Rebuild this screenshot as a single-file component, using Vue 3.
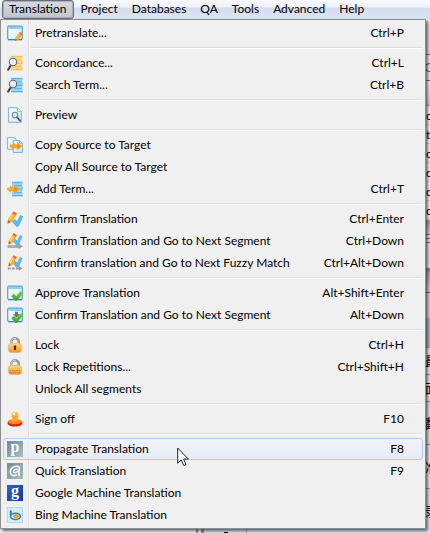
<script setup>
import { ref } from 'vue'

const menus = ['Translation', 'Project', 'Databases', 'QA', 'Tools', 'Advanced', 'Help']
const openMenu = ref('Translation')
const active = ref('Propagate Translation')

const groups = [
  [{ icon: 'pretranslate', label: 'Pretranslate...', keys: 'Ctrl+P' }],
  [
    { icon: 'concordance', label: 'Concordance...', keys: 'Ctrl+L' },
    { icon: 'search', label: 'Search Term...', keys: 'Ctrl+B' },
  ],
  [{ icon: 'preview', label: 'Preview' }],
  [
    { icon: 'copy', label: 'Copy Source to Target' },
    { label: 'Copy All Source to Target' },
    { icon: 'addterm', label: 'Add Term...', keys: 'Ctrl+T' },
  ],
  [
    { icon: 'confirm', label: 'Confirm Translation', keys: 'Ctrl+Enter' },
    { icon: 'confirmnext', label: 'Confirm Translation and Go to Next Segment', keys: 'Ctrl+Down' },
    { icon: 'confirmfuzzy', label: 'Confirm translation and Go to Next Fuzzy Match', keys: 'Ctrl+Alt+Down' },
  ],
  [
    { icon: 'approve', label: 'Approve Translation', keys: 'Alt+Shift+Enter' },
    { icon: 'approvenext', label: 'Confirm Translation and Go to Next Segment', keys: 'Alt+Down' },
  ],
  [
    { icon: 'lock', label: 'Lock', keys: 'Ctrl+H' },
    { icon: 'lockrep', label: 'Lock Repetitions...', keys: 'Ctrl+Shift+H' },
    { label: 'Unlock All segments' },
  ],
  [{ icon: 'stamp', label: 'Sign off', keys: 'F10' }],
  [
    { badge: 'p', tone: 'slate', label: 'Propagate Translation', keys: 'F8' },
    { icon: 'quick', label: 'Quick Translation', keys: 'F9' },
    { badge: 'g', tone: 'royal', label: 'Google Machine Translation' },
    { icon: 'bing', label: 'Bing Machine Translation' },
  ],
]

const fileRows = ['c', 't', 'c', 'c', 'c', 'c']
const segments = [
  { text: '最', size: 'short' },
  { text: '面', size: 'short' },
  { text: '翻', size: 'mid', tint: true },
  { text: '准', size: 'tall' },
  { text: '录', size: 'tall', tint: true },
]
</script>

<template>
  <div class="app">
    <svg class="defs" aria-hidden="true">
      <defs>
        <linearGradient id="gold" x1="0" y1="0" x2="0" y2="1">
          <stop offset="0" stop-color="#ffd985" /><stop offset="1" stop-color="#f3921f" />
        </linearGradient>
        <linearGradient id="slate" x1="0" y1="0" x2="1" y2="1">
          <stop offset="0" stop-color="#6f8f98" /><stop offset="1" stop-color="#a9bcc0" />
        </linearGradient>
        <linearGradient id="sky" x1="0" y1="0" x2="1" y2="1">
          <stop offset="0" stop-color="#ffffff" /><stop offset="1" stop-color="#cfe6f7" />
        </linearGradient>
        <linearGradient id="tick" x1="0" y1="0" x2="0" y2="1">
          <stop offset="0" stop-color="#7fd63c" /><stop offset="1" stop-color="#37961b" />
        </linearGradient>
        <g id="window">
          <rect x=".7" y="1.2" width="14.6" height="13.3" rx="1.2" fill="url(#sky)" stroke="#4ba5d3" stroke-width="1.2" />
          <path d="M1.3 3h13.4" stroke="#8ed0f0" stroke-width="2" />
          <path d="M1 14.8h14" stroke="#287aa5" />
        </g>
        <g id="lens">
          <path d="M4 10 1.2 14.6" stroke="#3d3d3d" stroke-width="2" stroke-linecap="round" />
          <circle cx="6" cy="7" r="3.7" fill="#e4eef5" fill-opacity=".95" stroke="#666" stroke-width="1.1" />
          <path d="M4.2 6.6q.7-1.6 2.2-1.6" fill="none" stroke="#fff" />
        </g>
        <g id="rightarrow">
          <path d="M.6 8.2h4V5.6l3 2.3 1.9-.1V5.4L15 9.7l-5.5 4.5v-2.5H5.2v1.8L.6 9.9z" fill="#fbab2b" stroke="#f6a125" stroke-width=".8" />
          <path d="m9.6 6.5 4 3.2-4 3.2z" fill="#ee8c18" />
        </g>
        <g id="pencil">
          <path d="M6.3.4 10 2.2l-4.6 8.5-4.8 2 .4-4.6z" fill="#ffb02c" />
          <path d="M6.3.4 10 2.2 8.8 4.5 5 2.4z" fill="#ea7048" />
          <path d="m.9 8.9 3 2.1-3.4 1.8z" fill="#a8713c" />
          <path d="M5.4 3.8 2.2 9" stroke="#ffe080" stroke-width="1.2" />
        </g>
        <g id="bluetick">
          <path d="m5.2 8.8 2.6-2 2.4 2L13.4 2.6l2.4 1.2-4 9.2-1.9 1z" fill="#5dbcec" stroke="#3d9fd2" stroke-width=".5" />
        </g>
        <g id="greentick">
          <path d="m4.5 11 2.3-2 2.5 2.4 4.2-4.8 2.3 1.5-5.8 7.5-1.5.1z" fill="url(#tick)" stroke="#4fb528" stroke-width=".5" />
        </g>
        <g id="padlock">
          <path d="M4.200 8V5a3.800 3.800 0 0 1 7.600 0v3" fill="none" stroke="#92979a" stroke-width="2.400" />
          <path d="M3.900 7V5a4.100 4.100 0 0 1 5-3.700" fill="none" stroke="#d4d7d9" />
          <rect x="1.400" y="6.300" width="13.200" height="9.200" rx="3" fill="url(#gold)" stroke="#e5a95f" stroke-width=".6" />
        </g>
      </defs>
      <symbol id="pretranslate" viewBox="0 0 16 16">
        <use href="#window" />
        <path d="m13.2 7 2.6 1.9-4.4 5.7-3.3 1.2.7-3.3z" fill="#ffb52c" stroke="#f29f28" stroke-width=".5" />
        <path d="m13.2 7 2.6 1.9-1.2 1.6L12 8.6z" fill="#ef7440" />
        <path d="m8.6 13.8 1.5 1.1-1.9.9z" fill="#8d571d" />
      </symbol>
      <symbol id="concordance" viewBox="0 0 16 16">
        <path d="M4 .8h12l-1 3 1 3.5-1 3.700 1 4.200H4z" fill="#ffd684" />
        <path d="M4 1.500h11.500M8 5h7M8 8.300h7.500M7 11.500h8M4 14.600h11.500" stroke="#fbc05a" stroke-width="1.200" />
        <use href="#lens" />
      </symbol>
      <symbol id="search" viewBox="0 0 16 16">
        <path d="M4 .8h12l-1 3 1 3.500-1 3.700 1 4.200H4z" fill="#8fd4fa" />
        <path d="M4 1.500h11.500M8 5h7M8 8.300h7.500M7 11.500h8M4 14.600h11.500" stroke="#5db8ea" stroke-width="1.200" />
        <use href="#lens" />
      </symbol>
      <symbol id="preview" viewBox="0 0 16 16">
        <path d="M1.6.7h9l3.7 3.7v10.9H1.6z" fill="url(#sky)" stroke="#7db3d3" />
        <path d="M10.6.7v3.7h3.7" fill="#fff" stroke="#7db3d3" stroke-width=".8" />
        <circle cx="8" cy="8" r="2.8" fill="#dde8ef" stroke="#7d8891" stroke-width="1.1" />
        <path d="m10.2 10.4 3 3.4" stroke="#515a62" stroke-width="1.8" stroke-linecap="round" />
      </symbol>
      <symbol id="copy" viewBox="0 0 16 16">
        <path d="M.6.6h6.6l2.4 2.4v9.2h-9z" fill="url(#sky)" stroke="#6fb7dc" />
        <path d="M6.2 3.6h6.6l2.6 2.6v9.2H6.2z" fill="url(#sky)" stroke="#6fb7dc" />
        <path d="M12.6 3.8v2.6h2.6" fill="none" stroke="#6fb7dc" stroke-width=".8" />
        <g transform="translate(2.5 1.2) scale(.83)"><use href="#rightarrow" /></g>
      </symbol>
      <symbol id="addterm" viewBox="0 0 16 16">
        <path d="M5 .7h11l-1 3.2 1 3.5-1 3.6 1 4.2H5z" fill="#8fd4fa" />
        <path d="M5 1.3h10.5M7 4.7h8M8 8h7.5M7 11.5h8M5 14.7h10.5" stroke="#5db8ea" stroke-width="1.2" />
        <g transform="translate(-.4 .2) scale(.83)"><use href="#rightarrow" /></g>
      </symbol>
      <symbol id="confirm" viewBox="0 0 16 16">
        <g transform="translate(0 1.8)"><use href="#bluetick" /></g>
        <use href="#pencil" />
      </symbol>
      <symbol id="confirmnext" viewBox="0 0 16 16">
        <path d="M.8 12.4h11.1v-1.5l3.7 2.5-3.7 2.4v-1.3H.8z" fill="#a3a3a3" stroke="#8b8b8b" stroke-width=".4" />
        <g transform="translate(1 0) scale(.9)"><use href="#bluetick" /><use href="#pencil" /></g>
      </symbol>
      <symbol id="confirmfuzzy" viewBox="0 0 16 16">
        <path d="M.8 12.4h2.9v2.2H.8zm4 0h2.9v2.2H4.8zm4 0h3.1v-1.5l3.7 2.5-3.7 2.4v-1.2H8.8z" fill="#999" />
        <g transform="translate(1 0) scale(.9)"><use href="#bluetick" /><use href="#pencil" /></g>
      </symbol>
      <symbol id="approve" viewBox="0 0 16 16"><use href="#window" /><use href="#greentick" /></symbol>
      <symbol id="approvenext" viewBox="0 0 16 16">
        <use href="#window" />
        <path d="M8 4.8h3v2.4h2l-3.5 3.2L6 7.2h2z" fill="#6c7479" />
        <use href="#greentick" />
      </symbol>
      <symbol id="lock" viewBox="0 0 16 16">
        <use href="#padlock" />
        <circle cx="8" cy="9.8" r="1.3" fill="#3b2710" />
        <path d="M7.3 10.5h1.4l.5 2.6H6.8z" fill="#3b2710" />
      </symbol>
      <symbol id="lockrep" viewBox="0 0 16 16">
        <use href="#padlock" />
        <path d="M2.5 11.6h11M3 13.6h10" stroke="#c98535" stroke-width="1" stroke-dasharray="1.5 .8" />
      </symbol>
      <symbol id="stamp" viewBox="0 0 16 16">
        <path d="M.6 10.8h14.8v2.1c-1.4 3.4-13.4 3.4-14.8 0z" fill="#d8251b" />
        <ellipse cx="8" cy="10.6" rx="7" ry="2.6" fill="#f68a18" />
        <path d="M6 6h4l.8 3.8q-2.8 1.4-5.6 0z" fill="#ffae32" />
        <circle cx="8" cy="3.9" r="3.6" fill="url(#gold)" />
        <circle cx="7" cy="3" r="1.3" fill="#fff0b8" />
      </symbol>
      <symbol id="quick" viewBox="0 0 16 16">
        <rect width="16" height="16" fill="url(#slate)" />
        <path d="M12.500 4.200C8.500 1.800 3.200 5 3.200 9c0 3.200 3.300 4.600 6.100 3M12.500 4.200c-.3 3.800-1.200 6.300-.4 8.300" fill="none" stroke="#fff" stroke-width="1.500" stroke-linecap="round" />
        <path d="M11.300 6.300C9 5.500 6.400 7.300 6.600 9c.4 1.300 3 .6 4.300-1.200" fill="none" stroke="#fff" stroke-width="1.300" />
      </symbol>
      <symbol id="bing" viewBox="0 0 16 16">
        <rect x=".5" y=".5" width="15" height="15" fill="#d5ebfa" stroke="#b3d6ee" />
        <path d="M3.800 3.400v6" stroke="#2f83c4" stroke-width="2" />
        <ellipse cx="8.500" cy="9.400" rx="4.900" ry="3.100" fill="#fff" stroke="#2f83c4" stroke-width="1.700" />
        <ellipse cx="9" cy="9.300" rx="2.800" ry="2" fill="#f6a01b" />
      </symbol>
    </svg>

    <nav class="menubar">
      <button
        v-for="m in menus"
        :key="m"
        type="button"
        :class="['top', { open: m === openMenu }]"
        @click="openMenu = m"
      >{{ m }}</button>
    </nav>

    <main class="workspace">
      <div class="side">
        <div class="tools"></div>
        <div class="search"><i></i></div>
        <div class="header"></div>
        <div v-for="(f, i) in fileRows" :key="i" class="file">{{ f }}</div>
        <div class="bar"></div>
        <div class="lines"></div>
        <div class="pane"></div>
        <div class="bar low"></div>
        <div class="blank"></div>
        <div class="lavender"></div>
        <div v-for="s in segments" :key="s.text" :class="['segment', s.size, { tint: s.tint }]">{{ s.text }}</div>
      </div>
      <div class="footer">
        <div class="grid-edge"></div>
        <div class="number"><i></i></div>
        <div class="rest"></div>
      </div>
    </main>

    <div class="menu" role="menu">
      <div v-for="(g, gi) in groups" :key="gi" class="group">
        <button
          v-for="item in g"
          :key="item.label"
          type="button"
          role="menuitem"
          :class="['item', { active: item.label === active }]"
          @mouseenter="active = item.label"
        >
          <span class="icon">
            <svg v-if="item.icon" width="16" height="16"><use :href="'#' + item.icon" /></svg>
            <span v-else-if="item.badge" :class="['badge', item.tone]">{{ item.badge }}</span>
          </span>
          <span class="label">{{ item.label }}</span>
          <span class="keys">{{ item.keys }}</span>
        </button>
      </div>
    </div>

    <svg class="cursor" width="13" height="20" viewBox="0 0 13 20" aria-hidden="true">
      <path d="M.7 1v15.2l3.5-3.3 2.5 5.6 2.3-1-2.4-5.4h4.8z" fill="#fff" stroke="#222" />
    </svg>
  </div>
</template>

<style>
body { margin: 0; }
</style>

<style scoped>
.app {
  position: relative;
  display: flex;
  flex-direction: column;
  min-height: 100vh;
  overflow: hidden;
  background: #f2f2f2;
  color: #000;
  font: 12px/16px Lato, "Noto Sans CJK SC", sans-serif;
}
.defs { position: absolute; width: 0; height: 0; }

button {
  box-sizing: border-box;
  margin: 0;
  border: 0;
  background: none;
  color: inherit;
  font: inherit;
  text-align: left;
}

.menubar {
  display: flex;
  height: 19px;
  padding-left: 2px;
  background: linear-gradient(#f8f9fc 0, #eef1f9 7px, #d5dcee 8px, #dde4f3 19px);
}
.top { padding: 1px 7px 2px; white-space: nowrap; }
.top.open {
  padding: 0 6px 1px;
  border: 1px solid #686c76;
  border-radius: 3px;
  background: linear-gradient(#d9dbe1, #bfc3cd);
  box-shadow: inset 0 0 1px 1px #a9adb8;
}

.workspace { display: flex; flex: 1; flex-direction: column; justify-content: space-between; }
.side { display: flex; flex-direction: column; align-self: flex-end; width: 5px; }
.side > div { box-sizing: border-box; overflow: hidden; }
.tools { height: 35px; background: #eee; }
.search { display: flex; align-items: center; height: 27px; border: solid #777; border-width: 1px 0; }
.search i { flex: none; width: 7px; height: 7px; border: 1px solid #444; border-radius: 50%; }
.header { height: 25px; background: linear-gradient(#fff, #ddd); border-bottom: 1px solid #aaa; }
.file { height: 19px; padding-left: 1px; border-bottom: 1px solid #ddd; background: #fff; line-height: 20px; }
.bar { height: 14px; background: linear-gradient(#aaa, #ddd); }
.lines { height: 12px; background: repeating-linear-gradient(#777 0 1px, #eee 1px 4px); }
.pane { height: 25px; border-bottom: 3px solid #7896b6; background: #eee; }
.bar.low { height: 22px; border-bottom: 1px solid #666; }
.blank { height: 25px; background: #ddd; }
.lavender { height: 29px; background: #b8b6d8; }
.segment { display: flex; align-items: center; border-top: 1px solid #999; background: #f2f2f2; font-size: 13px; }
.short { height: 27px; }
.mid { height: 43px; }
.tall { height: 44px; }
.tint { background: #e3edf7; }
.footer { display: flex; height: 5px; margin-top: -5px; }
.grid-edge { flex: none; width: 196px; border-right: 2px solid #999; background: #f5f5f5; }
.number {
  box-sizing: border-box;
  flex: none;
  width: 46px;
  margin-left: 3px;
  padding-left: 20px;
  border-right: 1px solid #aaa;
  border-left: 3px solid #7e9dbb;
  background: #dce8f4;
}
.number i { display: block; width: 4px; height: 1px; margin-top: 4px; background: #000; }
.rest { flex: 1; background: #e3edf7; }

.menu {
  position: absolute;
  top: 19px;
  right: 4px;
  left: 0;
  padding: 2px;
  border: 1px solid #8e8f94;
  background: linear-gradient(90deg, #f0f0f0 27px, #dedede 27px 28px, #fff 28px 29px, #f0f0f0 29px);
  background-origin: padding-box;
  box-shadow: 2px 2px 3px #0009;
}
.group + .group::before {
  content: "";
  display: block;
  height: 1px;
  margin: 3px 0 3px 28px;
  border-bottom: 1px solid #fff;
  background: #dedede;
}
.item {
  display: flex;
  align-items: center;
  width: 100%;
  height: 22px;
  padding: 0 18px 0 3px;
  border: 1px solid transparent;
  border-radius: 3px;
}
.item.active {
  border-color: #aecff7;
  background: linear-gradient(#f1f3f6cc, #e5ecf6cc);
}
.icon { display: flex; width: 28px; }
.badge {
  width: 16px;
  height: 16px;
  color: #fff;
  font: bold 16px/12px "Liberation Serif", serif;
  text-align: center;
}
.slate { background: linear-gradient(135deg, #6f8f98, #a9bcc0); }
.royal { background: linear-gradient(135deg, #2b62c4, #173a94); }
.label { flex: 1; white-space: nowrap; }
.cursor { position: absolute; top: 447px; left: 177px; }
</style>
